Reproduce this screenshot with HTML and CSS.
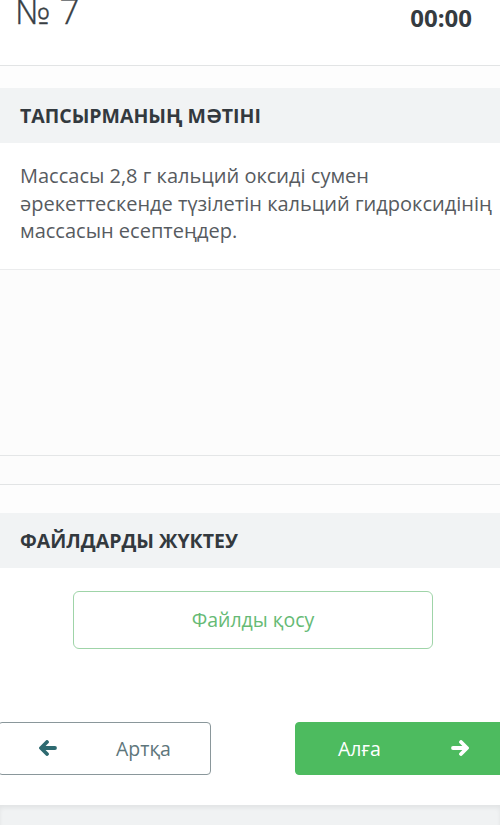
FILE: index.html
```html
<!DOCTYPE html>
<html lang="kk">
<head>
<meta charset="utf-8">
<title>№ 7</title>
<link rel="stylesheet" href="styles.css">
</head>
<body>
<div class="page">
  <header class="topbar">
    <div class="task-no">№ 7</div>
    <div class="timer">00:00</div>
  </header>

  <section class="block">
    <h2 class="block-title">ТАПСЫРМАНЫҢ МӘТІНІ</h2>
    <div class="task-text">Массасы 2,8 г кальций оксиді сумен әрекеттескенде түзілетін кальций гидроксидінің массасын есептеңдер.</div>
    <div class="answer-area"></div>
    <div class="answer-foot"></div>
  </section>

  <section class="block upload">
    <h2 class="block-title">ФАЙЛДАРДЫ ЖҮКТЕУ</h2>
    <div class="upload-body">
      <button class="btn-add" type="button">Файлды қосу</button>
    </div>
  </section>

  <nav class="pager">
    <button class="btn-nav btn-back" type="button">
      <svg class="arrow" viewBox="0 0 18 16" width="18" height="16"><path d="M8 2 L2 8 L8 14 M3 8 H16" fill="none" stroke="currentColor" stroke-width="3.8" stroke-linecap="round" stroke-linejoin="round"/></svg>
      <span>Артқа</span>
    </button>
    <button class="btn-nav btn-next" type="button">
      <span>Алға</span>
      <svg class="arrow" viewBox="0 0 18 16" width="18" height="16"><path d="M10 2 L16 8 L10 14 M15 8 H2" fill="none" stroke="currentColor" stroke-width="3.8" stroke-linecap="round" stroke-linejoin="round"/></svg>
    </button>
  </nav>

  <footer class="bottom"></footer>
</div>
</body>
</html>
```

FILE: styles.css
```css
* { box-sizing: border-box; }

html, body {
  margin: 0;
  padding: 0;
  height: 100%;
  overflow: hidden;
}

body {
  font-family: "Open Sans", "Noto Sans", sans-serif;
  background: #fdfdfd;
  color: #3b4046;
}

.page {
  display: flex;
  flex-direction: column;
  width: 500px;
}

/* top bar with task number and timer */
.topbar {
  height: 66px;
  display: flex;
  justify-content: space-between;
  align-items: flex-start;
  padding: 0 28px 0 15px;
  border-bottom: 1px solid #e2e4e5;
  background: #fff;
}

.task-no {
  font-size: 35px;
  font-weight: 300;
  line-height: 35px;
  margin-top: -7px;
  color: #383e43;
  -webkit-text-stroke: 0.4px #383e43;
}

.timer {
  font-size: 24px;
  font-weight: 700;
  line-height: 24px;
  margin-top: 6px;
  color: #353b40;
}

.block {
  margin-top: 22px;
  background: #fff;
}

.block-title {
  margin: 0;
  height: 55px;
  display: flex;
  align-items: center;
  padding: 0 20px;
  background: #f1f3f4;
  font-size: 19.5px;
  font-weight: 700;
  color: #33393e;
}

.task-text {
  padding: 19px 8px 24px 20px;
  font-size: 20px;
  line-height: 27.5px;
  color: #575b5f;
  border-bottom: 1px solid #ebeced;
}

.answer-area {
  height: 186px;
  background: #fcfcfc;
  border-bottom: 1px solid #e4e6e7;
}

.answer-foot {
  height: 29px;
  background: #fcfcfc;
  border-bottom: 1px solid #e2e4e5;
}

.upload {
  margin-top: 28px;
}

.upload-body {
  padding: 23px 0 41px 73px;
  background: #fff;
}

.btn-add {
  width: 360px;
  height: 58px;
  border: 1px solid #9fd4a8;
  border-radius: 6px;
  background: #fff;
  font-family: inherit;
  font-size: 19.5px;
  color: #66ba75;
}

/* previous / next navigation */
.pager {
  display: flex;
  justify-content: space-between;
  width: 510px;
  margin-left: -2px;
  padding: 32px 0 30px;
  background: #fff;
}

.btn-nav {
  width: 213px;
  height: 53px;
  border-radius: 4px;
  font-family: inherit;
  font-size: 19.5px;
  display: flex;
  align-items: center;
}

.btn-back {
  border: 1px solid #8a979b;
  background: #fff;
  color: #5e767b;
  padding: 0 0 0 40px;
}

.btn-back .arrow {
  color: #2e6a70;
}

.btn-back span {
  margin-left: 59px;
}

.btn-next {
  border: 1px solid #4dbb5f;
  background: #4dbb5f;
  color: #fff;
  padding: 0 0 0 42px;
}

.btn-next .arrow {
  margin-left: 70px;
}

.bottom {
  height: 30px;
  background: #f0f2f3;
  box-shadow: inset 0 3px 4px rgba(0, 0, 0, 0.06);
}
```
